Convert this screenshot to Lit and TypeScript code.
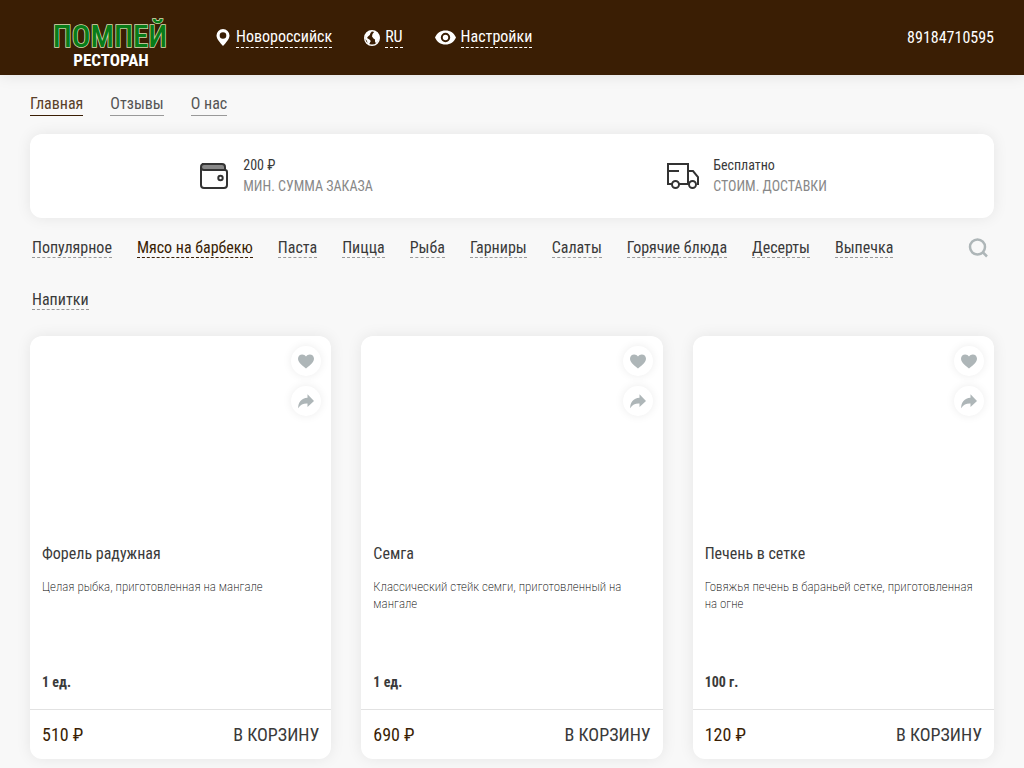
import { LitElement, html, css } from "lit";
import { customElement, property } from "lit/decorators.js";

interface Dish {
  name: string;
  text: string;
  unit: string;
  price: string;
}

const categories = [
  "Популярное", "Мясо на барбекю", "Паста", "Пицца", "Рыба", "Гарниры",
  "Салаты", "Горячие блюда", "Десерты", "Выпечка", "Напитки",
];

const dishes: Dish[] = [
  { name: "Форель радужная", text: "Целая рыбка, приготовленная на мангале", unit: "1 ед.", price: "510 ₽" },
  { name: "Семга", text: "Классический стейк семги, приготовленный на мангале", unit: "1 ед.", price: "690 ₽" },
  { name: "Печень в сетке", text: "Говяжья печень в бараньей сетке, приготовленная на огне", unit: "100 г.", price: "120 ₽" },
];

@customElement("dish-card")
export class DishCard extends LitElement {
  @property({ attribute: false }) dish!: Dish;

  static styles = css`
    :host {
      display: flex;
      flex-direction: column;
      background: #fff;
      border-radius: 12px;
      box-shadow: 0 0 15px rgba(0, 0, 0, 0.08);
      color: #3a3a3a;
    }
    .photo {
      display: flex;
      flex-direction: column;
      align-items: flex-end;
      gap: 10px;
      height: 190px;
      padding: 10px 10px 0;
    }
    button {
      font: inherit;
      color: inherit;
      border: 0;
      background: none;
      padding: 0;
      cursor: pointer;
    }
    .round {
      display: grid;
      place-items: center;
      width: 30px;
      height: 30px;
      border-radius: 50%;
      background: #fff;
      box-shadow: 0 0 10px rgba(0, 0, 0, 0.08);
    }
    .info {
      display: flex;
      flex-direction: column;
      flex: 1;
      padding: 8px 12px 17px;
    }
    h2 {
      margin: 0 0 14px;
      font-size: 16px;
      line-height: 20px;
      font-weight: 400;
    }
    p {
      margin: 0;
      min-height: 85px;
      font-size: 13px;
      line-height: 17px;
      font-weight: 200;
      color: #000;
    }
    .unit {
      margin-top: auto;
      padding-top: 9px;
      font-size: 14px;
      line-height: 20px;
      font-weight: 700;
    }
    .buy {
      display: flex;
      justify-content: space-between;
      align-items: center;
      padding: 12px;
      border-top: 1px solid #e2e2e2;
      font-size: 18px;
      line-height: 25px;
    }
    .price {
      color: #3a1e04;
    }
  `;

  render() {
    const d = this.dish;
    return html`
      <div class="photo">
        <button class="round" aria-label="В избранное">
          <svg width="16" height="15" viewBox="0 0 16 15" fill="#aeb6b8">
            <path d="M8 14.500C6 12.700 0 8.900 0 4.700C0 2 2 .500 4.200 .500C5.800 .500 7.200 1.300 8 2.600C8.800 1.300 10.200 .500 11.800 .500C14 .500 16 2 16 4.700C16 8.900 10 12.700 8 14.500Z" />
          </svg>
        </button>
        <button class="round" aria-label="Поделиться">
          <svg width="16" height="15" viewBox="0 0 16 15" fill="#aeb6b8">
            <path d="M9.500 .300L16 6.900L9.500 13V9.600C5.500 9.400 2.500 10.600 .200 14.300C0 8.400 3.400 4 9.500 3.700Z" />
          </svg>
        </button>
      </div>
      <div class="info">
        <h2>${d.name}</h2>
        <p>${d.text}</p>
        <span class="unit">${d.unit}</span>
      </div>
      <div class="buy">
        <span class="price">${d.price}</span>
        <button>В КОРЗИНУ</button>
      </div>
    `;
  }
}

@customElement("app-root")
export class AppRoot extends LitElement {
  static styles = css`
    :host {
      display: block;
      min-height: 100vh;
      padding-bottom: 9px;
      box-sizing: border-box;
      background: #f8f8f8;
      color: #3a3a3a;
      font-family: "Roboto Condensed", "Liberation Sans Narrow", "Roboto", sans-serif;
      font-size: 16px;
      line-height: 20px;
    }
    a {
      color: inherit;
      text-decoration: none;
    }
    button {
      font: inherit;
      color: inherit;
      border: 0;
      background: none;
      padding: 0;
      cursor: pointer;
    }
    header {
      display: flex;
      align-items: center;
      height: 75px;
      padding: 0 30px;
      background: #3a1e04;
      color: #fff;
      box-shadow: 0 0 15px rgba(0, 0, 0, 0.1);
    }
    .logo {
      width: 160px;
      height: 75px;
    }
    .logo svg {
      display: block;
    }
    .tools {
      display: flex;
      gap: 32px;
      margin-left: 26px;
      flex: 1;
    }
    .tool {
      display: flex;
      align-items: center;
      gap: 5px;
    }
    .dashed {
      border-bottom: 1px dashed currentColor;
    }
    .menu {
      display: flex;
      gap: 27px;
      padding: 19px 30px 18px;
      color: #555;
    }
    .menu a {
      padding-bottom: 1px;
      border-bottom: 1px solid #999;
    }
    .menu .current {
      color: #5a4028;
      border-color: #3a1e04;
    }
    .terms {
      display: grid;
      grid-template-columns: 1fr 1fr;
      margin: 0 30px;
      padding: 21px 0;
      background: #fff;
      border-radius: 12px;
      box-shadow: 0 0 15px rgba(0, 0, 0, 0.08);
    }
    .term {
      display: flex;
      justify-content: center;
      align-items: center;
      gap: 14px;
      padding-left: 30px;
    }
    .term + .term {
      padding: 0 12px 0 0;
    }
    .term div {
      display: flex;
      flex-direction: column;
      font-size: 14px;
      line-height: 21px;
    }
    .term small {
      font-size: 14px;
      color: #888;
    }
    .bar {
      display: flex;
      align-items: flex-start;
      gap: 20px;
      padding: 20px 36px 26px 32px;
    }
    nav.cats {
      display: flex;
      flex-wrap: wrap;
      flex: 1;
      gap: 32px 25px;
    }
    .cats a {
      line-height: 19px;
      border-bottom: 1px dashed #999;
    }
    .cats .current {
      color: #3a1e04;
      border-color: currentColor;
    }
    .grid {
      display: grid;
      grid-template-columns: repeat(3, 1fr);
      gap: 30px;
      padding: 0 30px;
    }
  `;

  render() {
    return html`
      <header>
        <a class="logo" href="#" aria-label="Помпей ресторан">
          <svg width="160" height="75" viewBox="0 0 160 75" text-anchor="middle">
            <text x="80" y="47" font-size="31" font-weight="500" fill="#087c18" stroke="#d8dcb0" stroke-width="1.500" paint-order="stroke">ПОМПЕЙ</text>
            <text x="81" y="66" font-size="17" font-weight="700" fill="#fff">РЕСТОРАН</text>
          </svg>
        </a>
        <div class="tools">
          <button class="tool">
            <svg width="15" height="17" viewBox="0 0 15 17" fill="#fff"><path fill-rule="evenodd" d="M7 0A6.500 6.500 0 0 1 13.500 6.500C13.500 10 10 13.500 7 17C4 13.500 .500 10 .500 6.500A6.500 6.500 0 0 1 7 0ZM7 3.200A3.300 3.300 0 1 0 7 9.800A3.300 3.300 0 1 0 7 3.200Z" /></svg>
            <span class="dashed">Новороссийск</span>
          </button>
          <button class="tool">
            <svg width="16" height="16" viewBox="0 0 16 16"><circle cx="8" cy="8" r="7.300" fill="none" stroke="#fff" stroke-width="1.400" /><path fill="#fff" d="M1.500 5L3 2.600L6 .800L8 1.500L6.500 3L5.800 5L4 6.500L3 8L5.500 9.500L6.800 11L5.500 13.500L5.500 15L3.500 13.500L3 11L1 8.500ZM8.500 4L10.500 1.500L13.500 2.500L15.500 7L14.800 10.500L12 13.500L11 11.500L11 9.500L9.500 8.500L8 6.500Z" /></svg>
            <span class="dashed">RU</span>
          </button>
          <button class="tool">
            <svg width="21" height="15" viewBox="0 0 21 15" fill="#fff"><path fill-rule="evenodd" d="M0 7.500C2 3 5.500 .500 10.500 .500S19 3 21 7.500C19 12 15.500 14.500 10.500 14.500S2 12 0 7.500ZM10.500 2.800A4.700 4.700 0 1 0 10.500 12.200A4.700 4.700 0 1 0 10.500 2.800Z" /><circle cx="10.500" cy="7.500" r="2.700" /></svg>
            <span class="dashed">Настройки</span>
          </button>
        </div>
        <a href="tel:89184710595">89184710595</a>
      </header>
      <nav class="menu">
        <a class="current" href="#">Главная</a>
        <a href="#">Отзывы</a>
        <a href="#">О нас</a>
      </nav>
      <section class="terms">
        <div class="term">
          <svg width="30" height="28" viewBox="0 0 30 28" fill="none" stroke="#333" stroke-width="2"><path d="M3 2H23Q26 2 26 5V8H5Q2 8 2 5Q2 2 5 2" fill="#888" /><path d="M2 5V23Q2 26 5 26H25Q28 26 28 23V10Q28 8 26 8" /><circle cx="21.500" cy="16" r="2.200" /></svg>
          <div><span>200 ₽</span><small>МИН. СУММА ЗАКАЗА</small></div>
        </div>
        <div class="term">
          <svg width="32" height="28" viewBox="0 0 32 28" fill="none" stroke="#333" stroke-width="2"><path d="M5 22H1V2H21V22H12M1 9H12M21 9H26L31 15V22H30M22 22H21" /><circle cx="8.500" cy="22.500" r="3.500" /><circle cx="25.500" cy="22.500" r="3.500" /></svg>
          <div><span>Бесплатно</span><small>СТОИМ. ДОСТАВКИ</small></div>
        </div>
      </section>
      <div class="bar">
        <nav class="cats">
          ${categories.map((c, i) => html`<a class=${i === 1 ? "current" : ""} href="#">${c}</a>`)}
        </nav>
        <button aria-label="Поиск">
          <svg width="20" height="20" viewBox="0 0 20 20" fill="none" stroke="#aeb6b8" stroke-width="2.500"><circle cx="9.500" cy="9" r="7.500" /><path d="M14.500 14L19 18.500" /></svg>
        </button>
      </div>
      <main class="grid">
        ${dishes.map((d) => html`<dish-card .dish=${d}></dish-card>`)}
      </main>
    `;
  }
}
